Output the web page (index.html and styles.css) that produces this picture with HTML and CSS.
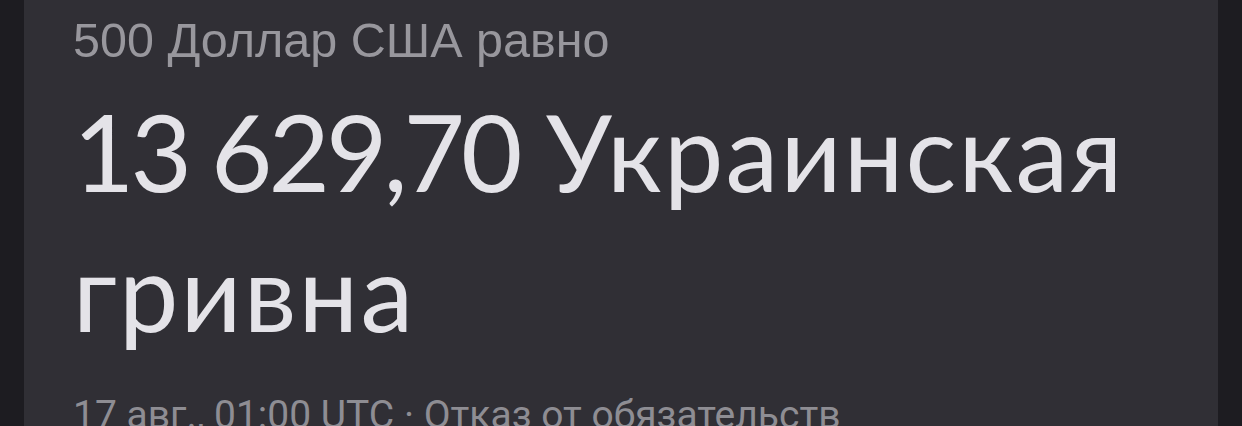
FILE: index.html
```html
<!DOCTYPE html>
<html lang="ru">
<head>
<meta charset="utf-8">
<link rel="stylesheet" href="styles.css">
</head>
<body>
<div class="page">
  <div class="card">
    <div class="lead">500 Доллар США равно</div>
    <div class="result"><span class="amount">13&nbsp;629,70</span> <span class="currency">Украинская гривна</span></div>
    <div class="meta">17 авг., 01:00 UTC · Отказ от обязательств</div>
  </div>
</div>
</body>
</html>
```
FILE: styles.css
```css
html, body {
  margin: 0;
  padding: 0;
  height: 100%;
  background: #1d1c21;
  overflow: hidden;
}
.page {
  height: 426px;
  padding-left: 24px;
  display: flex;
}
.card {
  width: 1194px;
  background: #302f35;
  padding-left: 49px;
  box-sizing: border-box;
  display: flex;
  flex-direction: column;
}
.lead {
  font-family: "Liberation Sans", Arial, sans-serif;
  font-size: 48.5px;
  line-height: 56px;
  color: #98979d;
  padding-top: 12px;
}
.result {
  font-family: Lato, "Noto Sans", sans-serif;
  font-size: 106px;
  line-height: 140px;
  color: #e4e3e8;
  margin-top: 13px;
  width: 1100px;
}
.amount {
  letter-spacing: -4px;
}
.currency {
  letter-spacing: 2.2px;
}
.meta {
  font-family: Roboto, "Liberation Sans", sans-serif;
  font-size: 39px;
  line-height: 56px;
  color: #8e8d93;
  margin-top: 26px;
}
```
